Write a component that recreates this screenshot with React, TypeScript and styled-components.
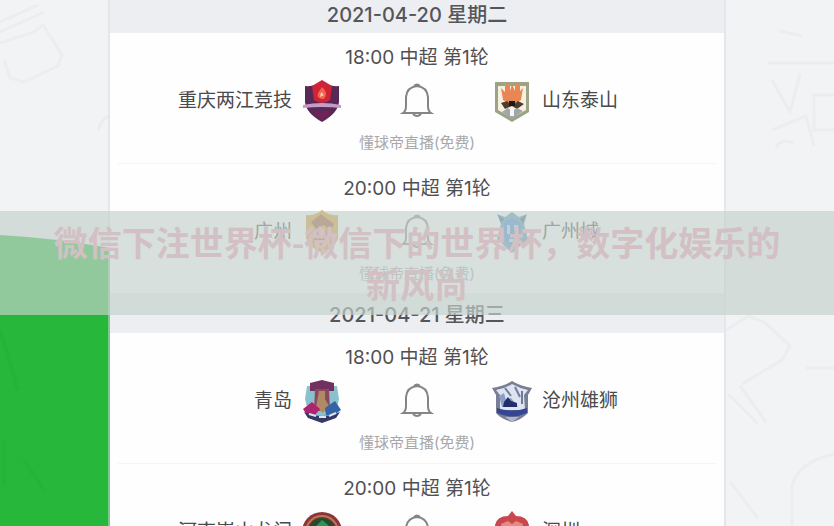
import React from "react";
import styled, { createGlobalStyle } from "styled-components";


const GlobalStyle = createGlobalStyle`
* {
    box-sizing: border-box;
}
body {
    margin: 0;
    background-color: #f1f3f5;
    font-family: Inter, "Noto Sans CJK SC", sans-serif;
    color: #4a4a4c;
}
`

const StylePage = styled.div`
position: relative;
height: 100vh;
overflow: hidden;
`
const StyleBackdrop = styled.svg`
position: absolute;
top: 0;
left: 0;
width: 100%;
height: 100%;
`
const StyleSchedule = styled.main`
position: relative;
width: 74%;
margin: -7px auto 0;
background-color: #fefefe;
border: 2px solid rgba(215, 217, 222, 0.5);
border-top: 0;
background-clip: padding-box;
`
const StyleDate = styled.h2`
margin: 0;
height: 40px;
line-height: 44px;
text-align: center;
font-size: 20px;
font-weight: 500;
color: #55565a;
background-color: #eceef2;
`
const StyleMatch = styled.article`
height: 130px;
padding-top: 14px;
margin: 0 8px;
display: flex;
flex-direction: column;
align-items: center;
gap: 10px;
& + & {
    border-top: 1px solid #f5f5f6;
}
`
const StyleTime = styled.h3`
margin: 0;
line-height: 22px;
font-size: 19px;
font-weight: 400;
color: #505052;
`
const StyleTeams = styled.div`
width: 100%;
display: grid;
grid-template-columns: 1fr 150px 1fr;
align-items: center;
`
const StyleTeam = styled.div<{ $away?: boolean }>`
display: flex;
flex-direction: ${(p) => (p.$away ? "row" : "row-reverse")};
align-items: center;
gap: 10px;
font-size: 19px;
line-height: 24px;
white-space: nowrap;
& svg {
    width: 40px;
    height: 44px;
}
`
const StyleBell = styled.button`
justify-self: center;
width: 40px;
height: 44px;
padding: 0;
border: 0;
background: none;
cursor: pointer;
& svg {
    display: block;
    width: 40px;
    height: 44px;
}
`
const StyleNote = styled.p`
margin: 0;
line-height: 20px;
font-size: 15px;
color: #a8a8aa;
`
const StyleBanner = styled.header`
position: absolute;
top: 211px;
left: 0;
width: 100%;
padding: 10px 40px;
background-color: rgba(196, 210, 203, 0.68);
& h1 {
    margin: 0;
    text-align: center;
    font-family: "Noto Sans CJK SC", sans-serif;
    font-size: 34px;
    line-height: 42px;
    font-weight: 700;
    color: #d2c0c4;
}
`

const crests: Record<string, React.ReactNode> = {
    chongqing: <>
        <path d="M3 7Q13 8 20 2Q27 8 37 7V23Q36 34 20 43Q4 34 3 23Z" fill="#582956" />
        <path d="M10 7L20 1L30 7L28 21Q20 27 12 21Z" fill="#cf2437" />
        <path d="M20 8Q27 14 22 20Q14 20 16 14Z" fill="#f3634f" />
        <path d="M19 13L22 16L18 18Z" fill="#ffd0b4" />
        <path d="M1 26Q20 22 39 26V29Q20 27 1 29Z" fill="#c79bc8" />
        <path d="M9 32H31L20 42Z" fill="#6c2456" />
    </>,
    shandong: <>
        <path d="M3 3H37V33L20 43L3 33Z" fill="#9da486" />
        <path d="M6 7H34V31L20 39L6 31Z" fill="#f8f0df" />
        <path d="M9 9L13 13V5H18V12L20 5L23 12V5H28V12L31 9L29 21L20 26L11 21Z" fill="#e88755" />
        <path d="M9 24L15 22L20 27L26 22L32 25L25 30L20 27L13 30Z" fill="#4e3c2c" />
        <path d="M17 22H23V27H17Z" fill="#1f1917" />
        <path d="M10 33L16 29L20 32L25 29L31 32L20 40Z" fill="#9fa7ac" />
        <path d="M18 30H22V37H18Z" fill="#f7f7f7" />
    </>,
    guangzhou: <>
        <path d="M4 5Q13 6 20 0Q27 6 36 5V28Q34 37 20 43Q6 37 4 28Z" fill="#d99a34" />
        <path d="M9 12L19 4L32 14L29 21L22 15L14 19Z" fill="#a3522a" />
        <path d="M11 22L19 17L28 24L23 37H14Z" fill="#efc06c" />
        <path d="M12 33L16 24L19 34L24 23L28 34" fill="none" stroke="#a56230" strokeWidth="3" />
    </>,
    gzcity: <>
        <path d="M5 4L13 7L20 2L27 7L35 4L32 14L36 29L20 43L5 29L9 14Z" fill="#5796bd" />
        <path d="M11 13L20 8L29 13L27 29L20 37L13 29Z" fill="#4386d4" />
        <path d="M15 15H18V24H15ZM22 15H26V21H22ZM17 29H24V32H17Z" fill="#b5d3e8" />
        <path d="M6 5L12 9L9 13Z M34 5L28 9L31 13Z" fill="#2f6174" />
    </>,
    qingdao: <>
        <path d="M5 7H35L37 20L33 36L20 42L7 36L3 20Z" fill="#89c2cd" />
        <path d="M8 4L20 1L32 4V12H8Z" fill="#713060" />
        <path d="M13 10H27L28 32H12Z" fill="#8b4960" />
        <path d="M17 12H23V20L27 27L21 34L14 28Z" fill="#b08a64" />
        <path d="M1 30L10 23L18 30L13 36H5Z" fill="#ad246f" />
        <path d="M23 29L33 22L39 31L32 36H24Z" fill="#3464a7" />
        <path d="M2 33Q20 41 38 33L34 39L20 44L6 39Z" fill="#343965" />
        <path d="M7 35L14 37M17 38H24M27 37L34 34" fill="none" stroke="#dce5ef" strokeWidth="2" />
    </>,
    cangzhou: <>
        <path d="M0 9Q12 7 20 2Q28 7 40 9L36 16V34Q29 41 20 43Q9 40 4 34V16Z" fill="#777e95" />
        <path d="M4 11Q14 9 20 5Q27 9 36 11L32 16L33 31H8L8 16Z" fill="#dfe4f1" />
        <path d="M13 9L19 17M23 8L28 18M30 12V25" stroke="#6f7b9d" strokeWidth="2" />
        <path d="M7 17L12 14L14 21L19 19L26 28H10Z" fill="#8d9dca" />
        <path d="M12 23L16 18L19 22L25 24V28H11Z" fill="#222e68" />
        <path d="M5 29Q20 34 35 29V34Q20 41 5 34Z" fill="#364692" />
        <path d="M13 38H27L20 43Z" fill="#b3b5d0" />
    </>,
    henan: <>
        <circle cx="20" cy="22" r="20" fill="#8e3439" />
        <circle cx="20" cy="22" r="16" fill="none" stroke="#b87a52" strokeWidth="2" />
        <circle cx="20" cy="22" r="14" fill="#254b2d" />
        <path d="M9 21L16 14L20 10L25 14L31 21L25 27H14Z" fill="#299655" />
        <path d="M17 17H24V23H17Z" fill="#164829" />
    </>,
    shenzhen: <>
        <path d="M20 1L24 6Q35 6 37 15L34 33L20 43L6 33L3 15Q5 6 16 6Z" fill="#c9474d" />
        <path d="M9 14L16 11L20 14L24 11L31 14L28 27H12Z" fill="#e58b82" />
        <path d="M12 16H28L20 26Z" fill="#9d2d38" />
    </>,
}

const days = [
    {
        date: "2021-04-20 星期二",
        matches: [
            { time: "18:00", home: "重庆两江竞技", homeCrest: "chongqing", away: "山东泰山", awayCrest: "shandong" },
            { time: "20:00", home: "广州", homeCrest: "guangzhou", away: "广州城", awayCrest: "gzcity" },
        ],
    },
    {
        date: "2021-04-21 星期三",
        matches: [
            { time: "18:00", home: "青岛", homeCrest: "qingdao", away: "沧州雄狮", awayCrest: "cangzhou" },
            { time: "20:00", home: "河南嵩山龙门", homeCrest: "henan", away: "深圳", awayCrest: "shenzhen" },
        ],
    },
]

const Crest = ({ name }: { name: string }) => (
    <svg viewBox="0 0 40 44" aria-hidden="true">{crests[name]}</svg>
)

const Bell = () => (
    <svg viewBox="0 0 40 44" fill="none" stroke="#858587" strokeWidth="2" aria-hidden="true">
        <path d="M17 7Q20 4 23 7M6 34Q9 32 9 27V18Q10 8 20 7Q30 8 31 18V27Q31 32 34 34H6Z" />
        <path d="M16 35Q20 39 24 35" />
    </svg>
)

const Backdrop = () => (
    <StyleBackdrop viewBox="0 0 834 526" preserveAspectRatio="none" aria-hidden="true">
        <path d="M0 235Q55 238 110 248Q220 268 330 330V526H0Z" fill="#27b73a" />
        <g fill="none" stroke="#ebedef" strokeWidth="3">
            <path d="M0 22L38 5M0 32L44 12M0 43L34 32L43 25L62 55L58 66L24 82L10 78L4 60" />
            <path d="M768 63H834M780 31L802 36M772 80L790 112L800 74M772 130L806 116L814 146M834 95H814V130H834" />
            <path d="M776 148Q780 138 794 143M726 330L748 316L764 322L790 346L782 360L742 384M740 386L766 422M728 394L758 424" />
            <path d="M834 454Q798 462 792 486V526M730 482L758 518M806 368H834" />
            <path d="M98 130Q103 118 108 116" />
        </g>
        <path d="M0 330L18 390M4 440V486M24 460L44 490" stroke="#26b339" strokeWidth="4" />
    </StyleBackdrop>
)

const App = () => {
    return (
        <>
            <GlobalStyle />
            <StylePage>
                <Backdrop />
                <StyleSchedule>
                    {days.map((day) => (
                        <section key={day.date}>
                            <StyleDate>{day.date}</StyleDate>
                            {day.matches.map((m) => (
                                <StyleMatch key={m.time}>
                                    <StyleTime>{m.time} 中超 第1轮</StyleTime>
                                    <StyleTeams>
                                        <StyleTeam><Crest name={m.homeCrest} />{m.home}</StyleTeam>
                                        <StyleBell type="button" aria-label="提醒"><Bell /></StyleBell>
                                        <StyleTeam $away><Crest name={m.awayCrest} />{m.away}</StyleTeam>
                                    </StyleTeams>
                                    <StyleNote>懂球帝直播(免费)</StyleNote>
                                </StyleMatch>
                            ))}
                        </section>
                    ))}
                </StyleSchedule>
                <StyleBanner>
                    <h1>微信下注世界杯-微信下的世界杯，数字化娱乐的新风尚</h1>
                </StyleBanner>
            </StylePage>
        </>
    )
}

export default App
